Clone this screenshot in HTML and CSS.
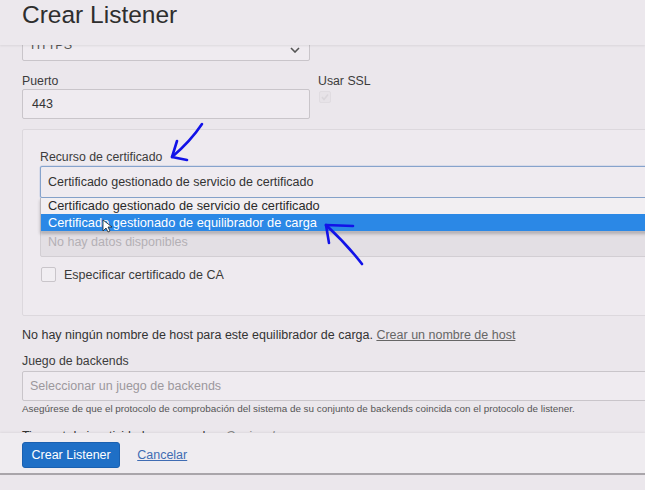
FILE: index.html
```html
<!DOCTYPE html>
<html lang="es">
<head>
<meta charset="utf-8">
<title>Crear Listener</title>
<link rel="stylesheet" href="styles.css">
</head>
<body>
<div class="page">
  <header class="hdr"><h1 class="title">Crear Listener</h1></header>
  <main class="scroll">
    <div class="content">
      <div class="select https">
        <span>HTTPS</span>
        <svg class="chev" width="10" height="6" viewBox="0 0 10 6"><polyline points="1,1 5,5 9,1" fill="none" stroke="#555" stroke-width="1.6"/></svg>
      </div>
      <div class="row">
        <div class="field port">
          <label class="lbl">Puerto</label>
          <div class="input">443</div>
        </div>
        <div class="field ssl">
          <label class="lbl">Usar SSL</label>
          <span class="chk chk-disabled">
            <svg width="10" height="10" viewBox="0 0 10 10"><polyline points="2,5 4,7.5 8,2.5" fill="none" stroke="#dad6db" stroke-width="1.6"/></svg>
          </span>
        </div>
      </div>
      <section class="panel">
        <label class="lbl">Recurso de certificado</label>
        <div class="select focus">
          <span>Certificado gestionado de servicio de certificado</span>
          <ul class="dropdown">
            <li class="opt">Certificado gestionado de servicio de certificado</li>
            <li class="opt opt-active">Certificado gestionado de equilibrador de carga</li>
          </ul>
        </div>
        <div class="gap"></div>
        <div class="input disabled">No hay datos disponibles</div>
        <div class="check-row">
          <span class="chk chk-box"></span>
          <span>Especificar certificado de CA</span>
        </div>
      </section>
      <p class="host">No hay ningún nombre de host para este equilibrador de carga. <a class="host-link" href="#">Crear un nombre de host</a></p>
      <label class="lbl lbl-backend">Juego de backends</label>
      <div class="input wide placeholder">Seleccionar un juego de backends</div>
      <p class="help">Asegúrese de que el protocolo de comprobación del sistema de su conjunto de backends coincida con el protocolo de listener.</p>
      <label class="lbl lbl-timeout">Timeout de inactividad en segundos <span class="opt-tag">Opcional</span></label>
    </div>
  </main>
  <footer class="ftr">
    <button class="btn" type="button">Crear Listener</button>
    <a class="cancel" href="#">Cancelar</a>
  </footer>
</div>
<svg class="annot" width="645" height="490" viewBox="0 0 645 490">
  <g fill="none" stroke="#1212e8" stroke-width="2.6" stroke-linecap="round" stroke-linejoin="round">
    <path d="M202,124 C196,133 185,146 172,157"/>
    <path d="M177,141 L172,157 L187,160"/>
    <path d="M362,264 C352,251 340,238 326,225"/>
    <path d="M353,226 L326,225 L329,243"/>
  </g>
  <path d="M103,220 L103,231 L106,228 L108,232 L110,231 L108,227 L112,227 Z" fill="#fff" stroke="#222" stroke-width="0.8"/>
</svg>
</body>
</html>
```
FILE: styles.css
```css
* { box-sizing: border-box; }
html, body { margin: 0; padding: 0; }
body {
  width: 645px;
  height: 490px;
  overflow: hidden;
  background: #ebe7ec;
  font-family: "Liberation Sans", Arial, sans-serif;
  font-size: 12.5px;
  color: #333;
  position: relative;
}
.page { width: 645px; height: 490px; overflow: hidden; }

.hdr {
  height: 45px;
  background: #ece8ed;
  padding: 1px 0 0 22px;
  position: relative;
  z-index: 2;
  box-shadow: 0 1px 2px rgba(0,0,0,0.08);
}
.title {
  margin: 0;
  font-size: 24.5px;
  line-height: 28px;
  font-weight: 400;
  color: #2e2e2e;
}

.scroll {
  height: 388px;
  overflow: hidden;
  position: relative;
}
.content {
  width: 720px;
  padding-left: 22px;
}

.lbl {
  display: block;
  font-size: 12.3px;
  line-height: 14px;
  color: #3c3c3c;
}

.select, .input {
  background: #efebf0;
  border: 1px solid #c9c5ca;
  border-radius: 2px;
  display: flex;
  align-items: center;
  color: #333;
  font-size: 12.5px;
}
.https {
  width: 288px;
  height: 32px;
  margin-top: -16px;
  padding: 0 9px 0 8px;
  justify-content: space-between;
  color: #555;
}
.chev { margin-top: 10px; }

.row { display: flex; margin-top: 13px; }
.field .lbl { margin-bottom: 1px; }
.port { width: 288px; }
.port .input { height: 30px; padding-left: 9px; }
.ssl { margin-left: 8px; }
.chk { display: block; }
.chk-disabled {
  width: 12px;
  height: 12px;
  margin: 3px 0 0 1px;
  background: #e7e3e8;
  border: 1px solid #e0dce1;
  border-radius: 2px;
}
.chk-disabled svg { display: block; margin: 0; width: 10px; height: 10px; }

.panel {
  margin-top: 10px;
  width: 700px;
  background: #eeeaef;
  border: 1px solid #dcd8dd;
  border-radius: 2px;
  padding: 20px 0 33px 17px;
}
.panel .lbl { margin-bottom: 2px; }
.focus {
  position: relative;
  height: 32px;
  width: 660px;
  padding-left: 7px;
  border-color: #86a3cc;
  box-shadow: 0 0 0 0.5px rgba(110,150,210,0.35);
}
.dropdown {
  position: absolute;
  left: -1px;
  right: -1px;
  top: calc(100% + 1px);
  margin: 0;
  padding: 0;
  list-style: none;
  background: #f2eff2;
  border: 1px solid #b9b6bb;
  border-top: 0;
  box-shadow: 0 2px 3px rgba(0,0,0,0.22);
  z-index: 3;
}
.opt {
  height: 16px;
  line-height: 16px;
  padding-left: 7px;
  font-size: 12.8px;
  color: #2a2a2a;
}
.opt-active {
  height: 17px;
  line-height: 17px;
  background: #2b88e6;
  color: #fff;
}
.gap { height: 26px; }
.disabled {
  height: 33px;
  width: 660px;
  padding: 2px 0 0 7px;
  background: #e3dfe4;
  border-color: #d2ced3;
  color: #b4b0b5;
}
.check-row {
  display: flex;
  align-items: center;
  margin-top: 10px;
  height: 15px;
  gap: 8px;
  color: #3a3a3a;
}
.chk-box {
  width: 15px;
  height: 15px;
  background: #f1eef2;
  border: 1px solid #c9c5ca;
  border-radius: 2px;
  margin-left: 1px;
}

.host {
  margin: 12px 0 0;
  line-height: 14px;
  color: #333;
}
.host-link { color: #666; text-decoration: underline; }

.lbl-backend { margin-top: 12px; }
.wide {
  margin-top: 3px;
  height: 30px;
  width: 700px;
  padding-left: 7px;
}
.placeholder { color: #9c989d; }
.help {
  margin: 2px 0 0;
  font-size: 9.9px;
  line-height: 12px;
  color: #555;
}
.lbl-timeout { margin-top: 14px; color: #333; }
.opt-tag { color: #888; font-style: italic; margin-left: 4px; }

.ftr {
  height: 42px;
  background: #efecf0;
  border-bottom: 2px solid #a9a5aa;
  padding: 9px 0 0 22px;
  display: flex;
  align-items: flex-start;
  gap: 17px;
  box-shadow: 0 -1px 2px rgba(0,0,0,0.06);
  position: relative;
  z-index: 2;
}
.btn {
  height: 26px;
  padding: 0 8.5px;
  background: #1f6fc6;
  border: 1px solid #1a60b0;
  border-radius: 3px;
  color: #fff;
  font-family: inherit;
  font-size: 12.5px;
}
.cancel {
  line-height: 26px;
  color: #3f6cb3;
  text-decoration: underline;
}

.annot {
  position: absolute;
  left: 0;
  top: 0;
  pointer-events: none;
  z-index: 5;
}
```
